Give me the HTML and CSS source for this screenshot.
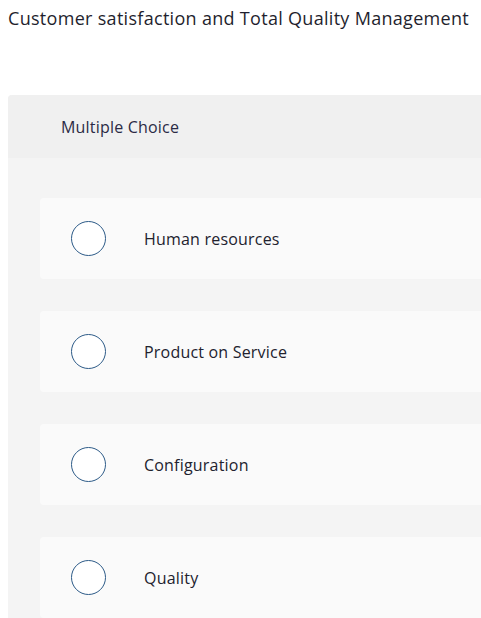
FILE: index.html
```html
<!DOCTYPE html>
<html lang="en">
<head>
    <meta charset="UTF-8">
    <meta name="viewport" content="width=device-width, initial-scale=1.0">
    <title>Quiz</title>
    <link rel="stylesheet" href="styles.css">
</head>
<body>
    <h1 class="question">Customer satisfaction and Total Quality Management</h1>
    <div class="card">
        <div class="card-head">Multiple Choice</div>
        <div class="choices">
            <label class="choice">
                <span class="radio"></span>
                <span class="choice-text">Human resources</span>
            </label>
            <label class="choice">
                <span class="radio"></span>
                <span class="choice-text">Product on Service</span>
            </label>
            <label class="choice">
                <span class="radio"></span>
                <span class="choice-text">Configuration</span>
            </label>
            <label class="choice">
                <span class="radio"></span>
                <span class="choice-text">Quality</span>
            </label>
        </div>
    </div>
</body>
</html>
```

FILE: styles.css
```css
*{
    margin:0;
    padding:0;
    box-sizing:border-box;
}
html{
    overflow:hidden;
}
body{
    margin:8px 0 8px 8px;
    background:white;
    font-family:"Open Sans",sans-serif;
    color:#1d1d2b;
}
.question{
    font-size:18px;
    font-weight:400;
    line-height:22px;
    margin-top:-1px;
    letter-spacing:0.3px;
    color:#1f1f2e;
}
.card{
    margin-top:66px;
    background:#f4f4f4;
    border-radius:4px 0 0 0;
}
.card-head{
    height:63px;
    background:#f0f0f0;
    border-radius:4px 0 0 0;
    padding-left:53px;
    display:flex;
    align-items:center;
    font-size:16px;
    letter-spacing:0.2px;
    color:#2b2b45;
}
.choices{
    padding:40px 0 0 32px;
    display:flex;
    flex-direction:column;
    gap:32px;
}
.choice{
    height:81px;
    background:#fafafa;
    border-radius:4px 0 0 4px;
    display:flex;
    align-items:center;
    padding-left:31px;
}
.radio{
    width:35px;
    height:35px;
    border-radius:50%;
    border:1.5px solid #2d5b88;
    background:white;
    flex-shrink:0;
}
.choice-text{
    margin-left:38px;
    font-size:16px;
    letter-spacing:0.2px;
    color:#22222e;
}
```
